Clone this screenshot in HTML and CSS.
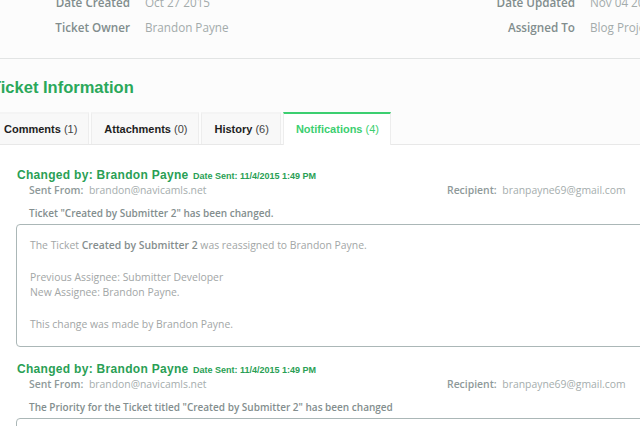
FILE: index.html
```html
<!DOCTYPE html>
<html>
<head>
<meta charset="utf-8">
<link rel="stylesheet" href="styles.css">
</head>
<body>
<div class="viewport">
  <div class="meta">
    <div class="m-label">Date Created</div>
    <div class="m-value">Oct 27 2015</div>
    <div class="m-label">Date Updated</div>
    <div class="m-value">Nov 04 2015</div>
    <div class="m-label">Ticket Owner</div>
    <div class="m-value">Brandon Payne</div>
    <div class="m-label">Assigned To</div>
    <div class="m-value">Blog Project</div>
  </div>
  <div class="section">
    <h2 class="section-title">Ticket Information</h2>
    <div class="tabs">
      <div class="tab"><b>Comments</b> (1)</div>
      <div class="tab"><b>Attachments</b> (0)</div>
      <div class="tab"><b>History</b> (6)</div>
      <div class="tab active"><b>Notifications</b> (4)</div>
    </div>
    <div class="panel">
      <div class="note">
        <div class="note-head"><span class="changed">Changed by: Brandon Payne</span> <span class="sent-date">Date Sent: 11/4/2015 1:49 PM</span></div>
        <div class="note-meta">
          <div><span class="k">Sent From:</span> <span class="v">brandon@navicamls.net</span></div>
          <div><span class="k">Recipient:</span> <span class="v">branpayne69@gmail.com</span></div>
        </div>
        <div class="note-subject">Ticket "Created by Submitter 2" has been changed.</div>
        <div class="note-box">
          <p>The Ticket <b>Created by Submitter 2</b> was reassigned to Brandon Payne.</p>
          <p>Previous Assignee: Submitter Developer<br>New Assignee: Brandon Payne.</p>
          <p>This change was made by Brandon Payne.</p>
        </div>
      </div>
      <div class="note">
        <div class="note-head"><span class="changed">Changed by: Brandon Payne</span> <span class="sent-date">Date Sent: 11/4/2015 1:49 PM</span></div>
        <div class="note-meta">
          <div><span class="k">Sent From:</span> <span class="v">brandon@navicamls.net</span></div>
          <div><span class="k">Recipient:</span> <span class="v">branpayne69@gmail.com</span></div>
        </div>
        <div class="note-subject">The Priority for the Ticket titled "Created by Submitter 2" has been changed</div>
        <div class="note-box">
          <p>The Ticket <b>Created by Submitter 2</b> priority was changed.</p>
          <p>Previous Priority: Normal<br>New Priority: High.</p>
          <p>This change was made by Brandon Payne.</p>
        </div>
      </div>
    </div>
  </div>
</div>
</body>
</html>
```

FILE: styles.css
```css
html, body {
  margin: 0;
  padding: 0;
  background: #fcfcfc;
  overflow: hidden;
  width: 640px;
  height: 426px;
}
body {
  font-family: "Open Sans", "Liberation Sans", sans-serif;
}
.viewport {
  margin-top: -10px;
  width: 720px;
}
.meta {
  display: grid;
  grid-template-columns: 130px 200px 215px 1fr;
  column-gap: 15px;
  line-height: 25px;
  font-size: 11.7px;
  padding-bottom: 18px;
  border-bottom: 1px solid #e2e4e4;
}
.m-label {
  text-align: right;
  font-weight: 600;
  color: #818d8d;
}
.m-value {
  color: #a3abab;
  white-space: nowrap;
}
.section {
  margin-left: -9px;
}
.section-title {
  margin: 18px 0 15px;
  font-family: "Liberation Sans", Arial, sans-serif;
  font-size: 16.5px;
  line-height: 20px;
  font-weight: bold;
  color: #2aa85a;
}
.tabs {
  display: flex;
  gap: 2px;
  border-bottom: 1px solid #e8e8e8;
  font-family: "Liberation Sans", Arial, sans-serif;
  font-size: 11px;
}
.tab {
  height: 32px;
  line-height: 31px;
  padding: 0 11px 0 12px;
  background: #f8f8f8;
  border: 1px solid #ededed;
  border-bottom: none;
  border-top-width: 2px;
  border-top-color: #f4f4f4;
  color: #444;
  margin-bottom: -1px;
  box-sizing: border-box;
}
.tab b {
  color: #1e1e1e;
}
.tab.active {
  background: #fff;
  border-top-color: #3ccf70;
  color: #3ccf70;
  height: 33px;
}
.tab.active b {
  color: #3ccf70;
}
.panel {
  background: #fff;
  padding: 22px 0 0 26px;
  min-height: 400px;
}
.note {
  margin-bottom: 14px;
}
.note-head {
  line-height: 14px;
  font-family: "Liberation Sans", Arial, sans-serif;
  color: #2a9f55;
  font-weight: bold;
  white-space: nowrap;
}
.changed {
  font-size: 12px;
  letter-spacing: 0.3px;
}
.sent-date {
  font-size: 9px;
}
.note-meta {
  display: grid;
  grid-template-columns: 418px auto;
  padding-left: 12px;
  font-size: 10.4px;
  line-height: 15px;
  white-space: nowrap;
}
.k {
  color: #8e9999;
  font-weight: 600;
}
.v {
  color: #a5adad;
  margin-left: 3px;
}
.note-subject {
  margin-top: 8px;
  padding-left: 12px;
  font-size: 10px;
  line-height: 15px;
  font-weight: 600;
  color: #838e8e;
  white-space: nowrap;
}
.note-box {
  margin-top: 3px;
  margin-left: -1px;
  border: 1px solid #abb7b7;
  border-radius: 4px;
  padding: 13px 13px 14px;
  font-size: 10.4px;
  line-height: 15.5px;
  color: #a2a6a6;
}
.note-box p {
  margin: 0 0 16px;
}
.note-box p:last-child {
  margin-bottom: 0;
}
.note-box b {
  font-weight: 600;
  color: #858e8e;
}
```
